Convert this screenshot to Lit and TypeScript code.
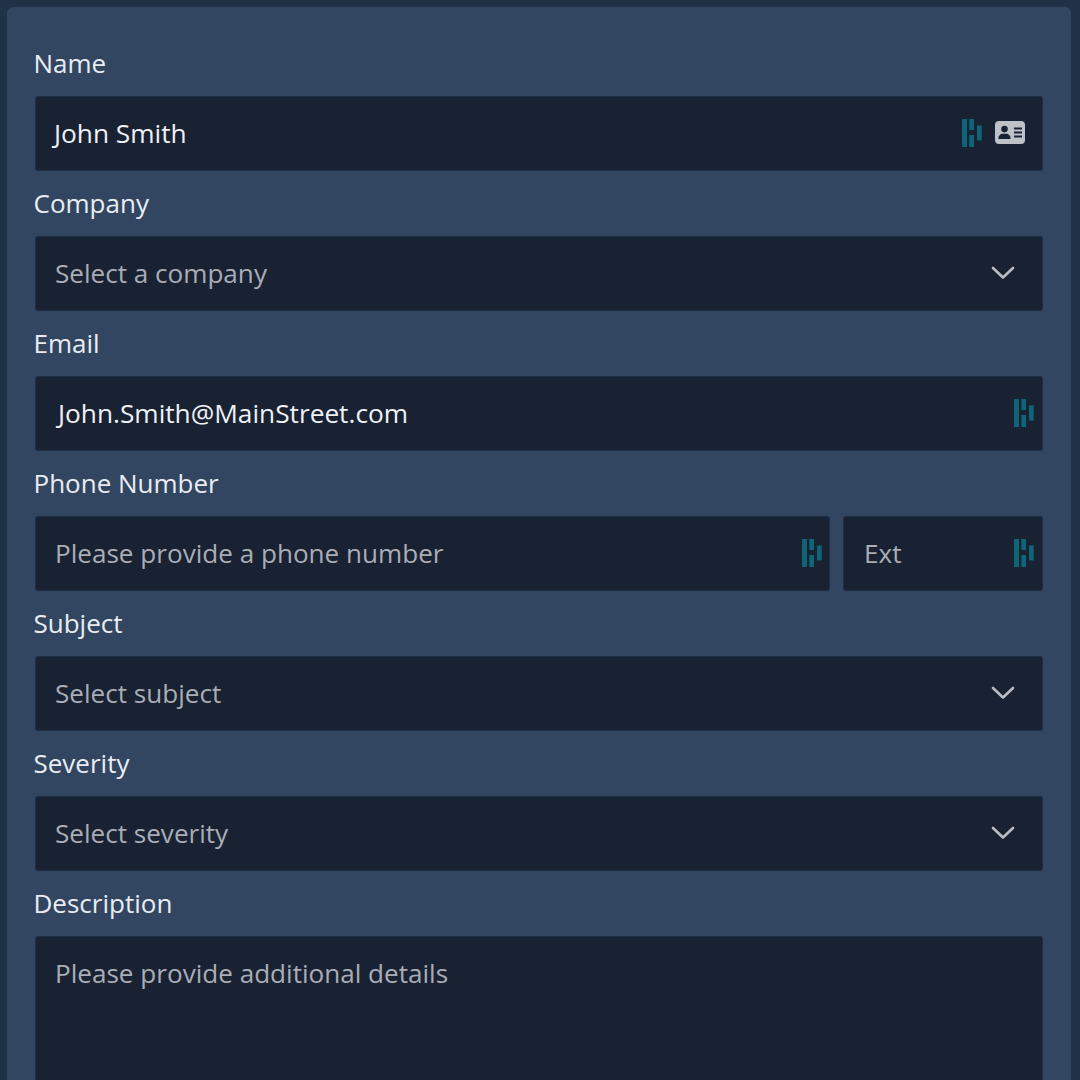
import { LitElement, html, css, svg } from "lit";
import { customElement } from "lit/decorators.js";

const dash = svg`<svg class="dash" width="20" height="28" viewBox="0 0 20 28"><g fill="#0f6478"><rect x="0" y="0" width="5" height="28"/><rect x="7.300" y="0" width="4.700" height="11"/><rect x="7.300" y="16" width="4.700" height="12"/><rect x="15" y="6.500" width="4.700" height="15"/></g></svg>`;
const card = svg`<svg class="card" width="30" height="23" viewBox="0 0 30 23"><path fill="#bfc1c8" fill-rule="evenodd" d="M4 0h22a4 4 0 0 1 4 4v15a4 4 0 0 1-4 4H4a4 4 0 0 1-4-4V4a4 4 0 0 1 4-4zM9.500 4.800a3.300 3.300 0 1 0 0 6.600 3.300 3.300 0 0 0 0-6.600zM3.900 18h11.200c.3 0 .5-.2.5-.5 0-2.600-2-4.700-4.500-4.700H7.900c-2.500 0-4.500 2.100-4.500 4.700 0 .3.200.5.500.5zM19 6.500v2h8v-2zM19 10.500v2h8v-2zM19 14.500v2h8v-2z"/></svg>`;
const chev = svg`<svg class="chev" width="24" height="14" viewBox="0 0 24 14"><path d="M2 2l10 9.500L22 2" fill="none" stroke="#b9bcc4" stroke-width="2.600" stroke-linecap="round" stroke-linejoin="round"/></svg>`;

@customElement("app-root")
export class AppRoot extends LitElement {
  static styles = css`
    :host { display: block; width: 1080px; height: 1080px; overflow: hidden; background: #1f3246; font-family: "Open Sans", "Noto Sans", sans-serif; }
    .panel { margin: 7px 9px 0 7px; background: #324661; border-radius: 6px 6px 0 0; padding: 32px 28px 0 28px; height: 1073px; box-sizing: border-box; }
    .field { display: flex; flex-direction: column; }
    .label { color: #e9edf2; font-size: 26px; line-height: 49px; height: 57px; margin-left: -1.500px; flex: none; }
    .row { display: flex; gap: 13px; flex: none; }
    .box { flex: none; min-width: 0; height: 75px; box-sizing: border-box; background: #192232; border-radius: 4px; display: flex; align-items: center; padding: 0 16px 2px 20px; font-size: 26.100px; color: #a9adb6; margin-bottom: 8px; box-shadow: inset 0 0 0 1px #1e2e45; }
    .row .box:first-child { flex: 0 0 795px; }
    .row .box + .box { flex: 0 0 200px; }
    .box .val { color: #eff1f5; font-size: 26.250px; }
    .box .text { flex: 1; white-space: nowrap; }
    .name { padding-left: 19px; }
    .email { padding-left: 23px; padding-right: 9px; }
    .phone { padding-right: 8px; }
    .ext { padding-left: 21px; padding-right: 9.500px; }
    .dash { flex: none; }
    .card { margin-left: 13px; flex: none; margin-right: 2px; }
    .chev { margin-right: 12px; flex: none; }
    .area { height: 400px; align-items: flex-start; padding-top: 19px; }
    .area .text { line-height: 36px; }
  `;

  render() {
    return html`<div class="panel">
      <div class="field"><div class="label">Name</div>
        <div class="box name"><span class="text val">John Smith</span>${dash}${card}</div></div>
      <div class="field"><div class="label">Company</div>
        <div class="box"><span class="text">Select a company</span>${chev}</div></div>
      <div class="field"><div class="label">Email</div>
        <div class="box email"><span class="text val">John.Smith@MainStreet.com</span>${dash}</div></div>
      <div class="field"><div class="label">Phone Number</div>
        <div class="row">
          <div class="box phone"><span class="text">Please provide a phone number</span>${dash}</div>
          <div class="box ext"><span class="text">Ext</span>${dash}</div>
        </div></div>
      <div class="field"><div class="label">Subject</div>
        <div class="box"><span class="text">Select subject</span>${chev}</div></div>
      <div class="field"><div class="label">Severity</div>
        <div class="box"><span class="text">Select severity</span>${chev}</div></div>
      <div class="field"><div class="label">Description</div>
        <div class="box area"><span class="text">Please provide additional details</span></div></div>
    </div>`;
  }
}
